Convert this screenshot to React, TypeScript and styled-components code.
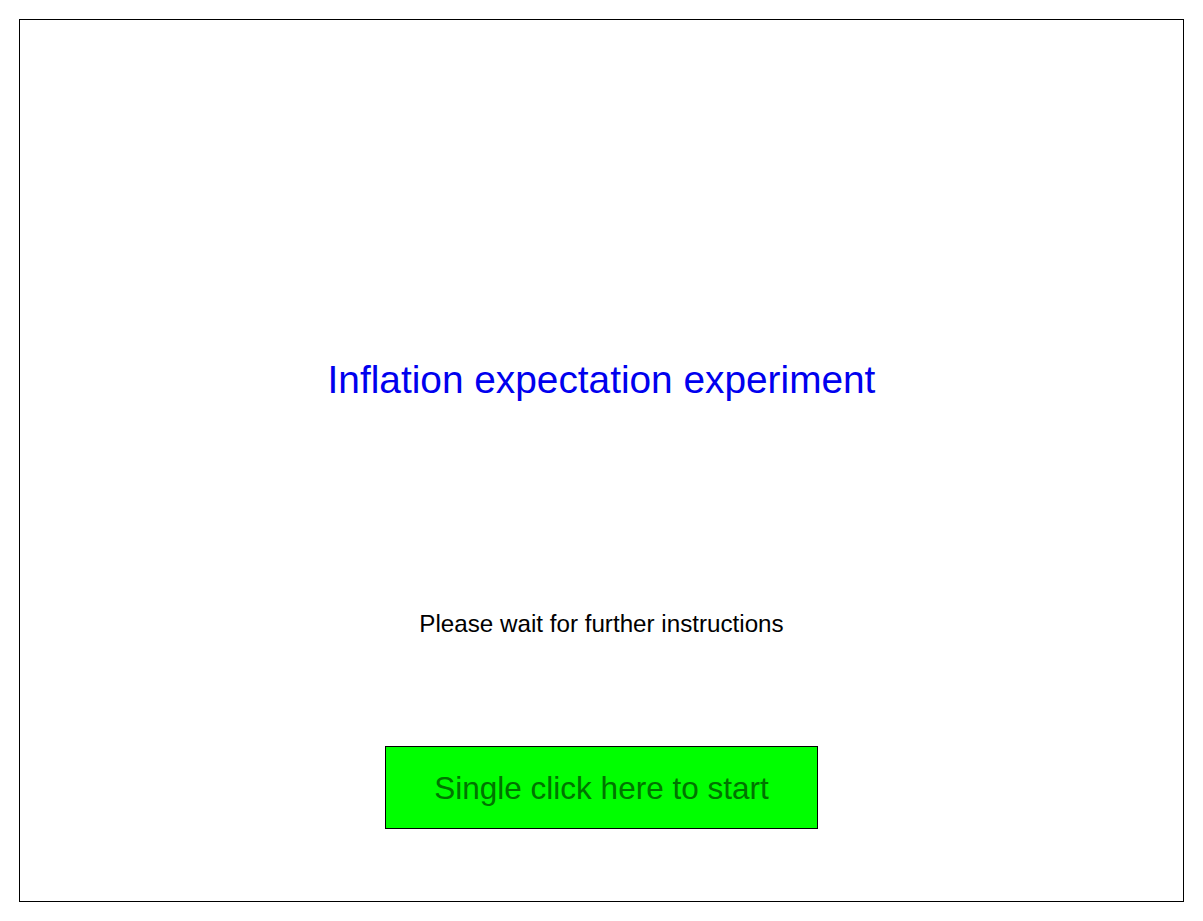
import React from 'react';
import styled, {createGlobalStyle} from "styled-components";

const GlobalStyle = createGlobalStyle`
  html, body {
    margin: 0;
    padding: 0;
    background: #ffffff;
  }

  body {
    font-family: "Liberation Sans", Arial, sans-serif;
  }
`

const Page = styled.div`
  width: 100%;
  height: 921px;
  padding: 19px;
  box-sizing: border-box;
`

const Frame = styled.div`
  width: 1165px;
  height: 883px;
  box-sizing: border-box;
  border: 1px solid #000000;
  padding-top: 337px;
  display: flex;
  flex-direction: column;
  align-items: center;
`

const Title = styled.h1`
  margin: 0;
  font-size: 38.8px;
  line-height: 46px;
  font-weight: normal;
  color: #0000ee;
`

const Notice = styled.p`
  margin: 207px 0 0;
  font-size: 24.2px;
  line-height: 28px;
  color: #000000;
`

const StartButton = styled.button`
  margin-top: 108px;
  width: 433px;
  height: 83px;
  box-sizing: border-box;
  border: 1px solid #000000;
  border-radius: 0;
  padding: 2px 0 0;
  background: #00ff00;
  color: #007400;
  font-family: "Liberation Sans", Arial, sans-serif;
  font-size: 31.5px;
  cursor: pointer;
`

const App = () => {
    return (
        <Page>
            <GlobalStyle/>
            <Frame>
                <Title>Inflation expectation experiment</Title>
                <Notice>Please wait for further instructions</Notice>
                <StartButton>Single click here to start</StartButton>
            </Frame>
        </Page>
    );
};

export default App;
